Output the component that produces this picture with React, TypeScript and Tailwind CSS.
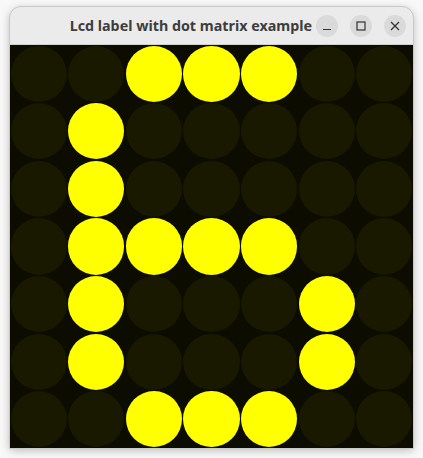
const PATTERN = [
  "..XXX..",
  ".X.....",
  ".X.....",
  ".XXXX..",
  ".X...X.",
  ".X...X.",
  "..XXX..",
];

function Dot({ on }: { on: boolean }) {
  return (
    <div className="p-[0.75px]">
      <div className={`aspect-square w-full rounded-full ${on ? "bg-[#ffff00]" : "bg-[#191900]"}`} />
    </div>
  );
}

function TitleButton({ children }: { children: React.ReactNode }) {
  return (
    <div className="flex h-[22px] w-[22px] items-center justify-center rounded-full bg-[#dadada] text-[#333333]">
      {children}
    </div>
  );
}

export default function App() {
  return (
    <div className="h-[458px] w-[423px] bg-[#f8f8f8] pl-[10px] pt-[7px]">
      <div className="w-[403px] overflow-hidden rounded-t-[11px] shadow-[0_2px_10px_rgba(0,0,0,0.28)] outline outline-1 outline-[#c8c8c8]">
        <div className="flex h-[38px] items-center justify-end border-b border-[#d0d0d0] bg-[#ebebeb] pr-[7px] font-['Noto_Sans',sans-serif]">
          <span className="mr-[4px] text-[14.3px] font-bold text-[#3d3d3d]">Lcd label with dot matrix example</span>
          <div className="flex gap-[12px]">
            <TitleButton>
              <svg width="10" height="10" viewBox="0 0 10 10">
                <path d="M1 8.5h8" stroke="currentColor" strokeWidth="1.2" />
              </svg>
            </TitleButton>
            <TitleButton>
              <svg width="10" height="10" viewBox="0 0 10 10">
                <rect x="1" y="1" width="8" height="8" fill="none" stroke="currentColor" strokeWidth="1.2" />
              </svg>
            </TitleButton>
            <TitleButton>
              <svg width="10" height="10" viewBox="0 0 10 10">
                <path d="M1 1l8 8M9 1l-8 8" stroke="currentColor" strokeWidth="1.3" />
              </svg>
            </TitleButton>
          </div>
        </div>
        <div className="grid h-[403px] w-[403px] grid-cols-7 bg-[#0c0c00]">
          {PATTERN.flatMap((row, r) =>
            row.split("").map((c, i) => <Dot key={`${r}-${i}`} on={c === "X"} />)
          )}
        </div>
      </div>
    </div>
  );
}
